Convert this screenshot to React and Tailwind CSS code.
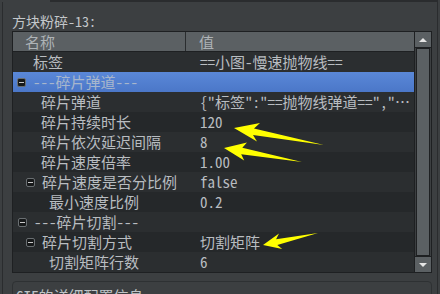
const rows = [
  { name: '标签', pad: 'pl-[20px]', value: '==小图-慢速抛物线==' },
  { name: '---碎片弹道---', pad: 'pl-[4px]', box: true, selected: true },
  { name: '碎片弹道', pad: 'pl-[28px]', value: '{"标签":"==抛物线弹道==","…' },
  { name: '碎片持续时长', pad: 'pl-[28px]', value: '120' },
  { name: '碎片依次延迟间隔', pad: 'pl-[28px]', value: '8' },
  { name: '碎片速度倍率', pad: 'pl-[28px]', value: '1.00' },
  { name: '碎片速度是否分比例', pad: 'pl-[13px]', box: true, value: 'false' },
  { name: '最小速度比例', pad: 'pl-[36px]', value: '0.2' },
  { name: '---碎片切割---', pad: 'pl-[5px]', box: true },
  { name: '碎片切割方式', pad: 'pl-[13px]', box: true, value: '切割矩阵' },
  { name: '切割矩阵行数', pad: 'pl-[36px]', value: '6' },
];

const arrows = [
  '234,128 260,123 254,128.5 324,145 253,135 257,141.5',
  '224,148 247,142.5 242.3,147.8 302,162 241.2,154.2 244.2,160.6',
  '263,245 279,233.5 276.1,239.3 318,233 277.3,245.1 282.2,249.1',
];

const MinusBox = () => (
  <span className="w-[9px] h-[9px] shrink-0 rounded-[2px] border border-[#6a6f72] bg-[#17191a] flex items-center justify-center">
    <span className="w-[5px] h-px bg-[#c8c8c8]" />
  </span>
);

export default function App() {
  return (
    <div
      className="relative w-[440px] h-[294px] overflow-hidden bg-[#3c3f41] text-[#b9bdc1]"
      style={{ fontFamily: '"Noto Sans Mono CJK SC", "Noto Sans CJK SC", "DejaVu Sans Mono", monospace' }}
    >
      <div className="h-[2px] ml-[50px] mr-[2px] bg-[#2a2c2e]" />
      <div className="flex h-[292px]">
        <div className="w-[2px]" />
        <div className="w-px bg-[#2a2c2e]" />
        <div className="flex-1 pl-[9px] pr-[5px] flex flex-col">
          <div className="h-[29px] pt-[9px] text-[14px] leading-[20px] text-[#c3c7ca]">方块粉碎-13:</div>

          {/* property tree */}
          <div className="flex border border-[#1e2022] bg-[#1e2022]">
            <div className="w-[401px] flex flex-col">
              <div className="h-[20px] flex bg-[#5b6063] border-b border-[#1e2022] text-[15px] leading-[19px] text-[#aeb3b6]">
                <div className="w-[173px] pl-[12px] border-r border-[#2a2d2f]">名称</div>
                <div className="flex-1 pl-[13px]">值</div>
              </div>
              {rows.map((r, i) => (
                <div
                  key={i}
                  className={`h-[20px] flex items-center text-[15px] leading-[20px] ${
                    r.selected
                      ? 'bg-gradient-to-b from-[#5a88d8] to-[#4b77c8] text-[#a7b6cc]'
                      : i % 2 === 0
                      ? 'bg-[#2b2e30]'
                      : 'bg-[#25282a]'
                  }`}
                >
                  <div className={`w-[173px] flex items-center gap-[7px] whitespace-nowrap ${r.pad}`}>
                    {r.box && <MinusBox />}
                    <span>{r.name}</span>
                  </div>
                  <div className="flex-1 pl-[14px] whitespace-nowrap overflow-hidden">{r.value}</div>
                </div>
              ))}
            </div>
            {/* scrollbar */}
            <div className="w-[16px] ml-px flex flex-col bg-[#3c3f41]">
              <div className="h-[16px] bg-[#5b6063] border-b border-[#1e2022] flex items-center justify-center">
                <span className="w-0 h-0 border-l-[4px] border-r-[4px] border-b-[4px] border-l-transparent border-r-transparent border-b-[#e6e6e6]" />
              </div>
              <div className="flex-1 mx-px bg-[#5b6063] border border-[#1e2022]" />
              <div className="h-[16px] bg-[#5b6063] border-t border-[#1e2022] flex items-center justify-center">
                <span className="w-0 h-0 border-l-[4px] border-r-[4px] border-t-[4px] border-l-transparent border-r-transparent border-t-[#e6e6e6]" />
              </div>
            </div>
          </div>

          <div className="mt-[8px] rounded-[4px] border border-[#2e3133] pl-[3px] pt-[4px] text-[15px] leading-[20px] text-[#bfc3c6]">
            GIF的详细配置信息
          </div>
        </div>
        <div className="w-px bg-[#2a2c2e]" />
        <div className="w-[2px]" />
      </div>

      {/* annotation arrows */}
      <svg className="absolute inset-0 pointer-events-none" width="440" height="294">
        {arrows.map((p, i) => (
          <polygon key={i} points={p} fill="#ffff00" />
        ))}
      </svg>
    </div>
  );
}
